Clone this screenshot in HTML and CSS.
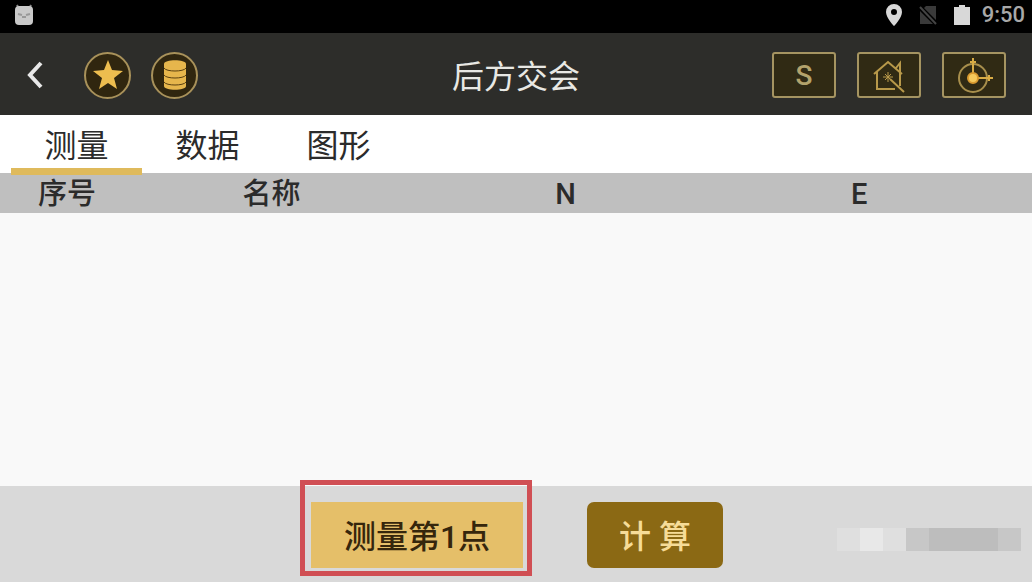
FILE: index.html
```html
<!DOCTYPE html>
<html lang="zh-CN">
<head>
  <meta charset="UTF-8" />
  <meta name="viewport" content="width=device-width, initial-scale=1" />
  <title>后方交会</title>
  <link rel="stylesheet" href="styles.css">
</head>
<body>
  <div class="status-bar">
    <svg class="status-app" width="20" height="22" viewBox="0 0 20 22">
      <path d="M4 3L3 1M16 3l1-2" stroke="#888" stroke-width="2"/>
      <rect x="1" y="2" width="18" height="19" rx="4" fill="#c9c9c9"/>
      <path d="M4 10l4 1M12 11l4-1M8 13h4" stroke="#999" stroke-width="2" fill="none"/>
    </svg>
    <svg width="18" height="24" viewBox="0 0 18 24">
      <path fill="#d8d8d8" fill-rule="evenodd" d="M9 1a8 8 0 0 0-8 8c0 6 8 14 8 14s8-8 8-14a8 8 0 0 0-8-8zm0 5a3 3 0 1 1 0 6 3 3 0 0 1 0-6z"/>
    </svg>
    <svg width="20" height="22" viewBox="0 0 20 22">
      <path fill="#3a3a3a" d="M8 2h10v14L6 4zM2 7l13 13H2z"/>
      <path d="M2 3l16 17" stroke="#444" stroke-width="2"/>
    </svg>
    <svg width="18" height="22" viewBox="0 0 18 22">
      <path fill="#d8d8d8" d="M6 1h6v2h5v18H1V3h5z"/>
    </svg>
    <span class="clock">9:50</span>
  </div>

  <header class="title-bar">
    <div class="left">
      <button class="back" aria-label="返回">
        <svg width="18" height="30" viewBox="0 0 18 30">
          <path d="M15 3L4 15l11 12" fill="none" stroke="#e8e8e8" stroke-width="4"/>
        </svg>
      </button>
      <button class="round" aria-label="收藏">
        <svg width="32" height="32" viewBox="0 0 32 32">
          <path fill="#edbd4f" d="M16 1l4 10 11 1-9 7 3 11-9-6-9 6 3-11-9-7 11-1z"/>
        </svg>
      </button>
      <button class="round" aria-label="数据库">
        <svg width="26" height="32" viewBox="0 0 26 32">
          <path fill="#e6b64c" d="M2 5c0-5 22-5 22 0v22c0 5-22 5-22 0z"/>
          <path d="M2 9c2 4 20 4 22 0M2 16c2 4 20 4 22 0M2 23c2 4 20 4 22 0" fill="none" stroke="#5a4010" stroke-width="1"/>
        </svg>
      </button>
    </div>
    <h1>后方交会</h1>
    <div class="right">
      <button class="box">S</button>
      <button class="box" aria-label="主页">
        <svg width="36" height="36" viewBox="0 0 36 36" fill="none" stroke="#b8994a" stroke-width="2">
          <path d="M3 17L17 5l14 12M6 15v17h18M29 15v14M25 11l4-5v9"/>
          <path d="M17 15v10M12 20h10M14 17l6 6M20 17l-6 6" stroke-width="1"/>
          <path d="M19 22l14 13"/>
        </svg>
      </button>
      <button class="box" aria-label="测站">
        <svg width="42" height="40" viewBox="0 0 42 40" fill="none" stroke="#a88f4c" stroke-width="2">
          <circle cx="20" cy="23" r="14"/>
          <path d="M20 3v20h20M17 7h6M36 20v6" stroke="#d9ac45"/>
          <circle cx="20" cy="23" r="5" fill="#f5c95c" stroke="#d99a30"/>
        </svg>
      </button>
    </div>
  </header>

  <nav class="tabs">
    <button class="tab active">测量</button>
    <button class="tab">数据</button>
    <button class="tab">图形</button>
  </nav>

  <main class="list">
    <table>
      <thead>
        <tr>
          <th class="col-index">序号</th><th class="col-name">名称</th><th class="col-n">N</th><th class="col-e">E</th>
        </tr>
      </thead>
      <tbody></tbody>
    </table>
  </main>

  <footer class="actions">
    <div class="highlight">
      <button class="measure">测量第1点</button>
    </div>
    <button class="calc">计 算</button>
    <div class="mosaic">
      <i class="pale"></i><i class="light"></i><i class="pale"></i><i class="mid"></i><i class="dark"></i><i class="dark"></i><i class="dark"></i><i class="mid"></i>
    </div>
  </footer>
</body>
</html>
```

FILE: styles.css
```css
* { box-sizing: border-box; }
body { margin: 0; min-height: 100vh; display: flex; flex-direction: column; font-family: Roboto, "Noto Sans CJK SC", sans-serif; background: #f9f9f9; color: #2b2b2b; }
button { font-family: inherit; padding: 0; border: none; background: none; color: inherit; cursor: pointer; }
svg { display: block; }

.status-bar { display: flex; align-items: center; gap: 15px; height: 33px; padding: 0 7px 4px 14px; background: #000; }
.status-app { margin-right: auto; }
.clock { margin-left: -4px; font-size: 22px; line-height: 28px; font-weight: 500; color: #a8a8a8; }

.title-bar { display: grid; grid-template-columns: 1fr auto 1fr; align-items: center; height: 82px; padding: 2px 26px 0; background: #2d2d2a; }
.title-bar h1 { margin: 0; padding-top: 4px; font-size: 32px; line-height: 40px; font-weight: 400; color: #e8e8e4; }
.left { display: flex; align-items: center; gap: 20px; }
.right { display: flex; justify-content: flex-end; gap: 21px; }
.back { margin-right: 20px; }
.round { display: flex; align-items: center; justify-content: center; width: 47px; height: 47px; border: 2px solid #a8915a; border-radius: 50%; background: #30260f; }
.box { display: flex; align-items: center; justify-content: center; width: 64px; height: 46px; border: 2px solid #a59461; border-radius: 3px; background: #302a14; font-size: 28px; font-weight: 500; color: #b3a36c; }

.tabs { display: flex; height: 58px; padding-left: 11px; background: #fff; }
.tab { position: relative; width: 131px; padding-top: 4px; font-size: 32px; line-height: 40px; }
.tab.active::after { content: ""; position: absolute; left: 0; right: 0; bottom: -2px; height: 7px; background: #dfba5c; }

.list { flex: 1; }
table { width: 100%; table-layout: fixed; border-collapse: collapse; }
th { height: 40px; padding: 3px 4px 0 0; background: #bfbfbf; font-size: 29px; line-height: 37px; font-weight: 500; text-align: center; }
th.col-index { width: 13%; padding-right: 0; }
.col-name { width: 27%; }
.col-n { width: 30%; }
th.col-e { padding-right: 36px; }

.actions { position: relative; display: flex; justify-content: center; gap: 64px; height: 96px; padding: 16px 0 14px 2px; background: #d9d9d9; }
.actions button { height: 66px; padding-top: 4px; font-size: 32px; line-height: 40px; font-weight: 500; }
.highlight { position: relative; }
.highlight::after { content: ""; position: absolute; inset: -22px -9px -8px -11px; border: 5px solid #d04f54; pointer-events: none; }
.actions .measure { width: 212px; background: #e5bf69; color: #35260c; }
.actions .calc { width: 136px; border-radius: 7px; background: #8b6914; color: #f6dc98; }

/* blurred-out block in the corner */
.mosaic { position: absolute; right: 11px; bottom: 31px; display: flex; }
.mosaic i { width: 23px; height: 23px; }
.pale { background: #dfdfdf; }
.light { background: #e8e8e8; }
.mid { background: #c7c7c7; }
.dark { background: #bdbdbd; }
```
